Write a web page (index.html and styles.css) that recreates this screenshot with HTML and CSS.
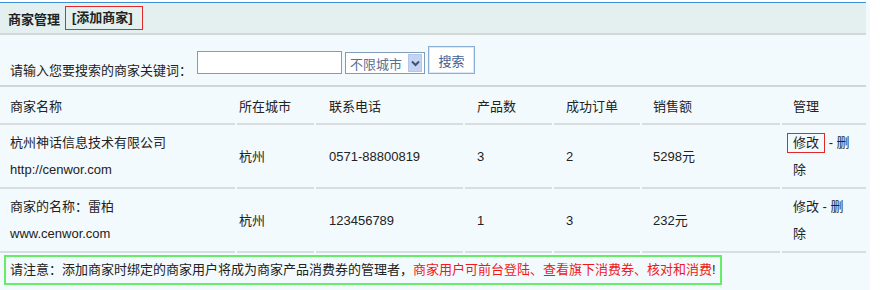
FILE: index.html
```html
<!DOCTYPE html>
<html lang="zh-CN">
<head>
  <meta charset="UTF-8">
  <title>商家管理</title>
  <link rel="stylesheet" href="styles.css">
</head>
<body>

  <div class="panel">
    <div class="head">
      <b>商家管理</b>
      <a class="add-link" href="#">[添加商家]</a>
    </div>

    <table class="list">
      <colgroup>
        <col class="c-name">
        <col class="c-city">
        <col class="c-phone">
        <col class="c-num">
        <col class="c-order">
        <col class="c-sale">
        <col class="c-op">
      </colgroup>
      <tr class="search-row">
        <td colspan="7">
          <div class="search">
            <span class="search-label">请输入您要搜索的商家关键词：</span>
            <input type="text" class="kw">
            <div class="city-select">
              <span>不限城市</span>
              <span class="arrow">
                <svg width="9" height="7" viewBox="0 0 9 7"><path d="M1 1.5 L4.5 5 L8 1.5" fill="none" stroke="#3f5275" stroke-width="2"/></svg>
              </span>
            </div>
            <button class="search-btn">搜索</button>
          </div>
        </td>
      </tr>
      <tr class="th-row">
        <td class="name">商家名称</td>
        <td class="city">所在城市</td>
        <td class="phone">联系电话</td>
        <td class="num">产品数</td>
        <td class="order">成功订单</td>
        <td class="sale">销售额</td>
        <td class="op">管理</td>
      </tr>
      <tr class="item">
        <td class="name">杭州神话信息技术有限公司<br>http://cenwor.com</td>
        <td class="city">杭州</td>
        <td class="phone">0571-88800819</td>
        <td class="num">3</td>
        <td class="order">2</td>
        <td class="sale">5298元</td>
        <td class="op"><span class="mark">修改</span> - 删除</td>
      </tr>
      <tr class="item">
        <td class="name">商家的名称：雷柏<br>www.cenwor.com</td>
        <td class="city">杭州</td>
        <td class="phone">123456789</td>
        <td class="num">1</td>
        <td class="order">3</td>
        <td class="sale">232元</td>
        <td class="op">修改 - 删除</td>
      </tr>
      <tr class="note-row">
        <td colspan="7">
          <div class="note">请注意：添加商家时绑定的商家用户将成为商家产品消费券的管理者，<span class="red">商家用户可前台登陆、查看旗下消费券、核对和消费</span>!</div>
        </td>
      </tr>
    </table>
  </div>

</body>
</html>
```

FILE: styles.css
```css
body {
  margin: 0;
  background-color: #fff;
  font-family: 'Liberation Sans', 'Noto Sans CJK SC', sans-serif;
  font-size: 13px;
  color: #222;
}

a,
a:visited {
  color: #222;
  text-decoration: none;
}

.panel {
  width: 870px;
  margin-top: 2px;
  background-color: #f3fafd;
  height: 288px;
  overflow: hidden;
}

.head {
  width: 858px;
  height: 30px;
  padding-left: 8px;
  background-color: #e3f0ef;
  border-top: 1px solid #3d8fd6;
  border-bottom: 2px solid #d3d7d8;
  display: flex;
  align-items: center;
}

.head b {
  font-weight: bold;
}

.add-link {
  display: inline-block;
  margin-left: 5px;
  height: 22px;
  line-height: 22px;
  padding: 0 9px 0 6px;
  border: 1px solid #e02a2a;
  font-weight: bold;
}

.list {
  width: 870px;
  margin-left: -2px;
  border-collapse: separate;
  border-spacing: 2px 0;
  table-layout: fixed;
}

.c-name { width: 235px; }
.c-city { width: 77px; }
.c-phone { width: 147px; }
.c-num { width: 87px; }
.c-order { width: 86px; }
.c-sale { width: 138px; }
.c-op { width: 84px; }

.list td {
  padding: 0;
  vertical-align: middle;
  border-bottom: 2px solid #dadddf;
}

/* 搜索栏 */
.search-row td {
  height: 50px;
  vertical-align: top;
  border-bottom-color: #d3d6d8;
}

.search {
  display: flex;
  align-items: flex-start;
  padding-left: 10px;
}

.search-label {
  margin-top: 26px;
  line-height: 20px;
  width: 187px;
}

.kw {
  margin: 16px 0 0 0;
  width: 145px;
  height: 23px;
  box-sizing: border-box;
  border: 1px solid #7f9db9;
  background: #fff;
  padding: 0;
}

.city-select {
  margin: 17px 0 0 3px;
  width: 80px;
  height: 22px;
  box-sizing: border-box;
  border: 1px solid #7f9db9;
  background: #fff;
  display: flex;
  align-items: center;
  justify-content: space-between;
  padding: 0 2px 0 4px;
  color: #5b6e92;
}

.city-select .arrow {
  width: 14px;
  height: 18px;
  background-color: #c3d3f2;
  border: 1px solid #b3c6ea;
  box-sizing: border-box;
  display: flex;
  align-items: center;
  justify-content: center;
}

.search-btn {
  margin: 11px 0 0 3px;
  width: 47px;
  height: 28px;
  background: #fff;
  border: 1px solid #8aaed6;
  box-shadow: inset 0 0 0 1px #dce8f6;
  color: #3f5f95;
  font-family: inherit;
  font-size: 13px;
  padding: 0;
}

/* 列表 */
.th-row td {
  height: 36px;
}

.item td {
  height: 62px;
  line-height: 27px;
}

.name { padding-left: 10px !important; }
.city { padding-left: 2px !important; }
.phone { padding-left: 13px !important; }
.num { padding-left: 12px !important; }
.order { padding-left: 12px !important; }
.sale { padding-left: 11px !important; }
.op { padding-left: 11px !important; padding-right: 13px !important; }

.mark {
  display: inline-block;
  line-height: 18px;
  margin-left: -6px;
  padding: 0 5px;
  border: 1px solid #e02a2a;
}

/* 提示 */
.note-row td {
  border-bottom: none;
  padding: 2px 0 0 4px;
}

.note {
  display: inline-block;
  height: 26px;
  line-height: 26px;
  padding: 0 4px;
  border: 2px solid #66ec66;
}

.red {
  color: #f01818;
}
```
